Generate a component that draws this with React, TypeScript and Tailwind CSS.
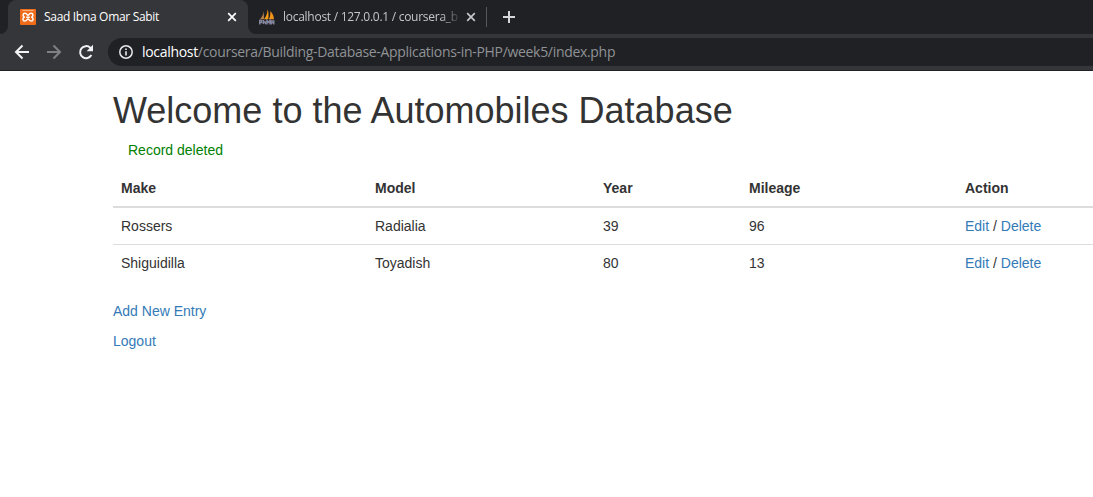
import type { ReactNode } from "react";

const records = [
  { make: "Rossers", model: "Radialia", year: 39, mileage: 96 },
  { make: "Shiguidilla", model: "Toyadish", year: 80, mileage: 13 },
];

function XamppIcon() {
  return (
    <svg className="size-4 shrink-0" viewBox="0 0 16 16" fill="none">
      <rect width="16" height="16" rx="1" fill="#ee6c1a" />
      <path d="M2.500 1.500h11" stroke="#f9b17f" strokeWidth="1" />
      <path
        d="M8 6.400C7.200 6.400 6.900 4.300 5 4.300 2.600 4.300 2.500 6.900 4.300 8.100 2.300 9.200 2.500 12 4.800 12c2 0 2-1.900 3.200-1.900s1.200 1.900 3.200 1.900c2.300 0 2.500-2.800.5-3.900 1.800-1.200 1.700-3.800-.7-3.800-1.900 0-2.200 2.100-3 2.100ZM6.200 8.200h3.600"
        stroke="#fff"
        strokeWidth="1.500"
        strokeLinejoin="round"
      />
    </svg>
  );
}

function SailsIcon() {
  return (
    <svg className="size-4 shrink-0" viewBox="0 0 16 16">
      <path d="M4.700 2 5 10.300H.8C2.800 8.500 4.200 6.200 4.700 2Z" fill="#b9824a" />
      <path d="M8.600.3c1 3 1.200 6.500.6 10H5C7.200 7.800 8.300 5 8.600.3Z" fill="#f89c0e" />
      <path d="M11.300 2c2 2 3.500 4.700 3.700 8.300H9.800c1.400-2.500 1.700-5 1.500-8.300Z" fill="#f3921b" />
      <path
        d="M.7 15.500v-4h2v2h-2M4.500 11v4m0-2h2v2.200M8 15.500v-4l1.500 1.800L11 11.500v4M12.200 15.500v-3.500h2.600v3.500m-2.600-1.700h2.600"
        fill="none"
        stroke="#85869f"
        strokeWidth="1.400"
      />
    </svg>
  );
}

function CloseIcon({ color }: { color: string }) {
  return (
    <svg className="size-[10px] shrink-0" viewBox="0 0 10 10" stroke={color} strokeWidth="1.700">
      <path d="m1.200 1.200 7.600 7.600m0-7.600-7.600 7.600" />
    </svg>
  );
}

function TabStrip() {
  return (
    <div className="flex h-[34px] bg-[#202124]">
      <svg className="h-[34px] w-2 shrink-0" viewBox="0 0 8 34">
        <path d="M8 26v8H0a8 8 0 0 0 8-8Z" fill="#35363a" />
      </svg>
      <div className="flex w-[240px] shrink-0 items-center rounded-t-lg bg-[#35363a] pl-3 pr-[11px]">
        <XamppIcon />
        <span className="ml-2 flex-1 whitespace-nowrap text-[12px] leading-4 tracking-[-0.310px] text-white">
          Saad Ibna Omar Sabit
        </span>
        <CloseIcon color="#ffffff" />
      </div>
      <svg className="h-[34px] w-2 shrink-0" viewBox="0 0 8 34">
        <path d="M0 26v8h8a8 8 0 0 1-8-8Z" fill="#35363a" />
      </svg>
      <div className="flex items-center pl-[3px]">
        <SailsIcon />
        <span className="ml-2 w-[177px] whitespace-nowrap text-[12px] leading-4 tracking-[-0.270px] text-[#c3c6ca] [mask-image:linear-gradient(to_right,black_158px,transparent_179px)]">
          localhost / 127.0.0.1 / coursera_b
        </span>
        <span className="ml-[6px] flex">
          <CloseIcon color="#c3c6ca" />
        </span>
        <span className="ml-[10px] h-5 w-px bg-[#55575b]" />
        <svg className="ml-4 size-3" viewBox="0 0 12 12" stroke="#d5d7da" strokeWidth="2">
          <path d="M6 0v12M0 6h12" />
        </svg>
      </div>
    </div>
  );
}

function Toolbar() {
  return (
    <div className="flex h-[37px] border-b border-[#202124] bg-[#35363a] pl-[14px] pt-1">
      <div className="flex h-7 items-center gap-4">
        <svg className="size-4" viewBox="0 0 16 16" fill="none" stroke="#f1f3f4" strokeWidth="2">
          <path d="M15 8H2.500M8.500 1.500 2 8l6.500 6.500" />
        </svg>
        <svg className="size-4" viewBox="0 0 16 16" fill="none" stroke="#808185" strokeWidth="2">
          <path d="M1 8h12.500M7.500 1.500 14 8l-6.500 6.500" />
        </svg>
        <svg className="size-4" viewBox="0 0 16 16" fill="none">
          <path d="M13.400 11A6 6 0 1 1 12.300 3.800L14 5.500" stroke="#f1f3f4" strokeWidth="2" />
          <path d="M15 .8v6.400H8.600Z" fill="#f1f3f4" />
        </svg>
      </div>
      <div className="ml-[14px] flex h-7 flex-1 items-center rounded-l-full bg-[#202124] pl-[11px]">
        <svg className="size-[14px] shrink-0" viewBox="0 0 14 14" fill="none" stroke="#e8eaed">
          <circle cx="7" cy="7" r="6.200" strokeWidth="1.500" />
          <path d="M7 6.200v4.300M7 3.500V5" strokeWidth="1.600" />
        </svg>
        <span className="ml-[9px] whitespace-nowrap text-[14px] leading-5 tracking-[-0.310px] text-[#8f9296]">
          <span className="text-white">localhost</span>
          /coursera/Building-Database-Applications-in-PHP/week5/index.php
        </span>
      </div>
    </div>
  );
}

function Link({ children }: { children: ReactNode }) {
  return (
    <a href="#" className="text-[#337ab7]">
      {children}
    </a>
  );
}

export default function App() {
  return (
    <div className="h-[497px] w-full overflow-hidden bg-white">
      <header className="font-['Open_Sans',sans-serif]">
        <TabStrip />
        <Toolbar />
      </header>
      <main className="pl-[113px] pt-5 font-['Liberation_Sans',sans-serif] text-[14px] leading-5 text-[#333333]">
        <h1 className="mb-[10px] text-[36px] font-normal leading-[39px]">
          Welcome to the Automobiles Database
        </h1>
        <p className="mb-[10px] pl-[15px] text-[#008000]">Record deleted</p>
        <table className="mb-5 w-[1140px] table-fixed border-separate border-spacing-0 text-left">
          <colgroup>
            <col className="w-[254px]" />
            <col className="w-[228px]" />
            <col className="w-[146px]" />
            <col className="w-[216px]" />
            <col />
          </colgroup>
          <thead>
            <tr>
              {["Make", "Model", "Year", "Mileage", "Action"].map((title) => (
                <th key={title} className="border-b-2 border-[#dddddd] p-2 font-bold">
                  {title}
                </th>
              ))}
            </tr>
          </thead>
          <tbody className="[&>tr:not(:first-child)>td]:border-t [&>tr>td]:border-[#dddddd] [&>tr>td]:p-2">
            {records.map((record) => (
              <tr key={record.make}>
                <td>{record.make}</td>
                <td>{record.model}</td>
                <td>{record.year}</td>
                <td>{record.mileage}</td>
                <td>
                  <Link>Edit</Link> / <Link>Delete</Link>
                </td>
              </tr>
            ))}
          </tbody>
        </table>
        <p className="mb-[10px]">
          <Link>Add New Entry</Link>
        </p>
        <p>
          <Link>Logout</Link>
        </p>
      </main>
    </div>
  );
}
